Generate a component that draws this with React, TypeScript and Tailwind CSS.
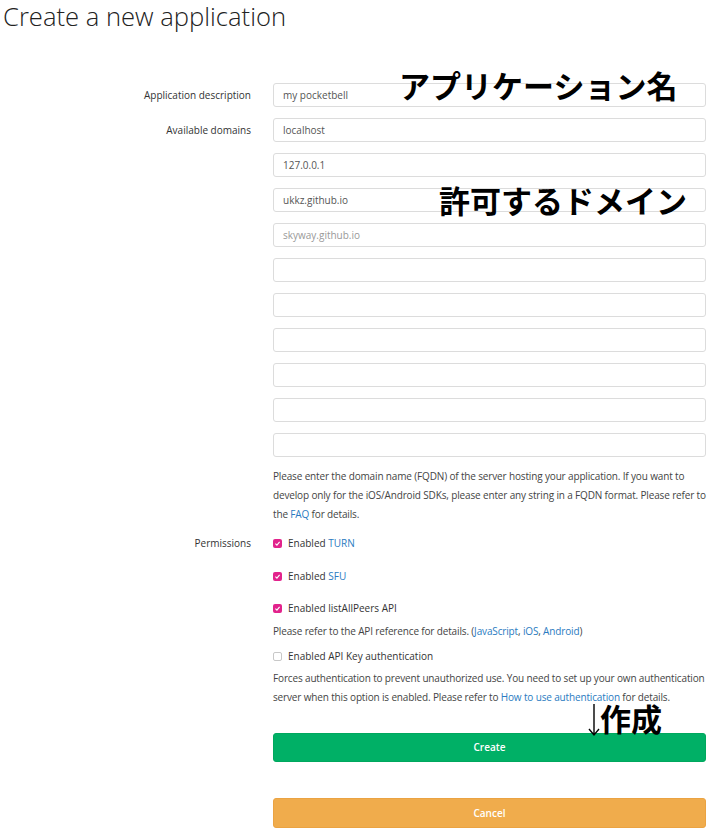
import React from 'react'

const filled = ['localhost', '127.0.0.1', 'ukkz.github.io']
const empties = [0, 1, 2, 3, 4, 5]

function Check({ on }: { on: boolean }) {
  return on ? (
    <span className="flex h-[9px] w-[9px] items-center justify-center rounded-[2px] bg-[#e2238c]">
      <svg viewBox="0 0 10 10" className="h-[7px] w-[7px]">
        <path d="M2 5.2 L4.2 7.4 L8 2.8" fill="none" stroke="white" strokeWidth="1.6" />
      </svg>
    </span>
  ) : (
    <span className="h-[9px] w-[9px] rounded-[2px] border border-[#c8c8c8] bg-white" />
  )
}

function Field({ value, placeholder }: { value?: string; placeholder?: string }) {
  return (
    <div className="flex h-[24px] w-[433px] items-center rounded-[3px] border border-[#dcdcdc] bg-white px-[9px] text-[10px]">
      {value ? (
        <span className="text-[#555]">{value}</span>
      ) : (
        <span className="text-[#999]">{placeholder}</span>
      )}
    </div>
  )
}

const A = ({ children }: { children: React.ReactNode }) => <span className="text-[#2a7bc1]">{children}</span>

export default function App() {
  return (
    <div className="relative h-[837px] w-[715px] overflow-hidden bg-white text-[#333] font-['Open_Sans',sans-serif]">
      <h1 className="pl-[3px] pt-[2px] text-[25.6px] font-light leading-[30px] text-[#222]">Create a new application</h1>

      <div className="mt-[51px] flex flex-col gap-[11px]">
        <div className="flex items-center">
          <div className="w-[251px] text-right text-[10px]">Application description</div>
          <div className="ml-[22px]"><Field value="my pocketbell" /></div>
        </div>
        <div className="flex items-start">
          <div className="w-[251px] pt-[5px] text-right text-[10px] leading-[14px]">Available domains</div>
          <div className="ml-[22px] flex flex-col gap-[11px]">
            {filled.map((d) => (
              <Field key={d} value={d} />
            ))}
            <Field placeholder="skyway.github.io" />
            {empties.map((i) => (
              <Field key={i} />
            ))}
          </div>
        </div>
      </div>

      <div className="ml-[273px] mt-[10px] w-[438px] text-[10px] leading-[19px] tracking-[-0.15px] text-[#444]">
        Please enter the domain name (FQDN) of the server hosting your application. If you want to develop only for the iOS/Android SDKs, please enter any string in a FQDN format. Please refer to the <A>FAQ</A> for details.
      </div>

      <div className="mt-[10px] flex items-start text-[10px] leading-[19px]">
        <div className="w-[251px] text-right">Permissions</div>
        <div className="ml-[22px] flex w-[438px] flex-col">
          <label className="flex items-center gap-[6px]">
            <Check on />
            <span>Enabled <A>TURN</A></span>
          </label>
          <label className="mt-[14px] flex items-center gap-[6px]">
            <Check on />
            <span>Enabled <A>SFU</A></span>
          </label>
          <label className="mt-[13px] flex items-center gap-[6px]">
            <Check on />
            <span>Enabled listAllPeers API</span>
          </label>
          <div className="mt-[4px] tracking-[-0.15px] text-[#444]">
            Please refer to the API reference for details. (<A>JavaScript</A>, <A>iOS</A>, <A>Android</A>)
          </div>
          <label className="mt-[6px] flex items-center gap-[6px]">
            <Check on={false} />
            <span>Enabled API Key authentication</span>
          </label>
          <div className="mt-[3px] tracking-[-0.15px] text-[#444]">
            Forces authentication to prevent unauthorized use. You need to set up your own authentication server when this option is enabled. Please refer to <A>How to use authentication</A> for details.
          </div>
        </div>
      </div>

      <div className="ml-[273px] mt-[26px] flex w-[433px] flex-col gap-[36px]">
        <button className="h-[29px] w-full rounded-[3px] border border-[#00a85e] bg-[#00b066] text-[10px] font-semibold text-white">
          Create
        </button>
        <button className="h-[30px] w-full rounded-[3px] border border-[#eba342] bg-[#f0ac4c] text-[10px] font-semibold text-white">
          Cancel
        </button>
      </div>

      {/* annotations */}
      <div className="absolute left-[399px] top-[66px] text-[31px] font-bold leading-[38px] text-black font-['Noto_Sans_CJK_JP',sans-serif]">
        アプリケーション名
      </div>
      <div className="absolute left-[439px] top-[181px] text-[31px] font-bold leading-[38px] text-black font-['Noto_Sans_CJK_JP',sans-serif]">
        許可するドメイン
      </div>
      <div className="absolute left-[588px] top-[699px] flex items-start">
        <svg viewBox="0 0 12 34" className="mt-[4px] h-[34px] w-[12px]">
          <path d="M6 1 V32 M1 26 L6 32 L11 26" fill="none" stroke="black" strokeWidth="1.4" />
        </svg>
        <span className="text-[31px] font-bold leading-[38px] text-black font-['Noto_Sans_CJK_JP',sans-serif]">作成</span>
      </div>
    </div>
  )
}
